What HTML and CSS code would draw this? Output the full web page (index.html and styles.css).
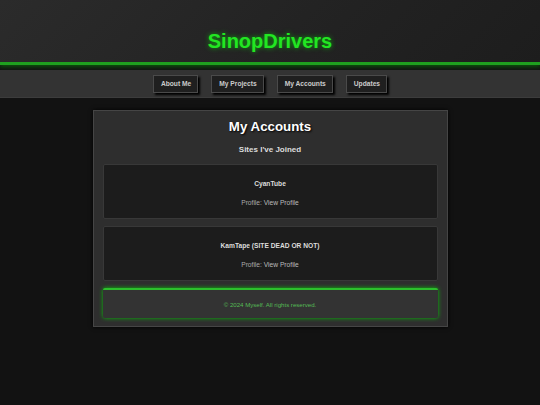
FILE: index.html
```html
<!DOCTYPE html>
<html lang="en">
<head>
<meta charset="utf-8">
<title>SinopDrivers - My Accounts</title>
<link rel="stylesheet" href="styles.css">
</head>
<body>
<header class="site-header">
  <h1 class="logo">SinopDrivers</h1>
</header>
<nav class="nav">
  <a class="nav-btn" href="#">About Me</a>
  <a class="nav-btn" href="#">My Projects</a>
  <a class="nav-btn" href="#">My Accounts</a>
  <a class="nav-btn" href="#">Updates</a>
</nav>
<main class="container">
  <h2 class="page-title">My Accounts</h2>
  <h3 class="subtitle">Sites I've Joined</h3>
  <section class="card">
    <p class="card-name">CyanTube</p>
    <p class="card-line">Profile: <a href="#">View Profile</a></p>
  </section>
  <section class="card">
    <p class="card-name">KamTape (SITE DEAD OR NOT)</p>
    <p class="card-line">Profile: <a href="#">View Profile</a></p>
  </section>
  <footer class="footer">
    <p>&copy; 2024 Myself. All rights reserved.</p>
  </footer>
</main>
</body>
</html>
```
FILE: styles.css
```css
html, body {
  margin: 0;
  padding: 0;
}
body {
  background: #121212;
  font-family: "Liberation Sans", Arial, sans-serif;
  font-size: 6.67px;
  color: #ddd;
  min-height: 405px;
}
.site-header {
  background: linear-gradient(135deg, #2b2b2b 0%, #222 60%, #1d1d1d 100%);
  padding: 29px 0 9px;
  border-bottom: 3px solid #1fa01f;
  box-shadow: 0 2px 4px rgba(0, 200, 0, 0.35);
  text-align: center;
}
.logo {
  margin: 0;
  font-size: 20px;
  line-height: 24px;
  font-weight: bold;
  color: #22e622;
  text-shadow: 0 0 5px rgba(0, 255, 0, 0.6);
}
.nav {
  margin-top: 5px;
  background: #333;
  height: 28px;
  border-bottom: 1px solid #3c3c3c;
  display: flex;
  justify-content: center;
  align-items: flex-start;
  gap: 13px;
  padding-top: 5px;
  box-sizing: border-box;
}
.nav-btn {
  display: block;
  background: #1f1f1f;
  color: #ccc;
  border: 1px solid #4a4a4a;
  box-shadow: 2px 2px 2px #000;
  font-weight: bold;
  font-size: 6.67px;
  line-height: 8px;
  padding: 4px 6px 4px 7px;
  text-decoration: none;
}
.container {
  width: 355px;
  box-sizing: border-box;
  margin: 12px auto 0;
  background: #2e2e2e;
  border: 1px solid #454545;
  padding: 8px 9px 8px;
  text-align: center;
  box-shadow: 0 0 4px #000;
}
.page-title {
  margin: 0;
  font-size: 13.3px;
  line-height: 16px;
  color: #fff;
  text-shadow: 1px 1px 2px #000;
}
.subtitle {
  margin: 10px 0 9px;
  font-size: 8px;
  line-height: 10px;
  color: #ddd;
}
.card {
  background: #1c1c1c;
  border: 1px solid #383838;
  border-radius: 2px;
  padding: 15px 0 11px;
  margin-bottom: 7px;
}
.card p {
  margin: 0;
  line-height: 8px;
}
.card-name {
  font-weight: bold;
  color: #ddd;
}
.card .card-line {
  margin-top: 11px;
  color: #aaa;
}
.card-line a {
  color: #bbb;
  text-decoration: none;
}
.footer {
  background: #333;
  border-top: 2px solid #2cc02c;
  box-shadow: 0 0 4px rgba(0, 230, 0, 0.8);
  border-radius: 2px;
  height: 30px;
  box-sizing: border-box;
  display: flex;
  align-items: center;
  justify-content: center;
  padding-top: 1px;
}
.footer p {
  margin: 0;
  font-size: 6.1px;
  color: #55bb55;
}
```
